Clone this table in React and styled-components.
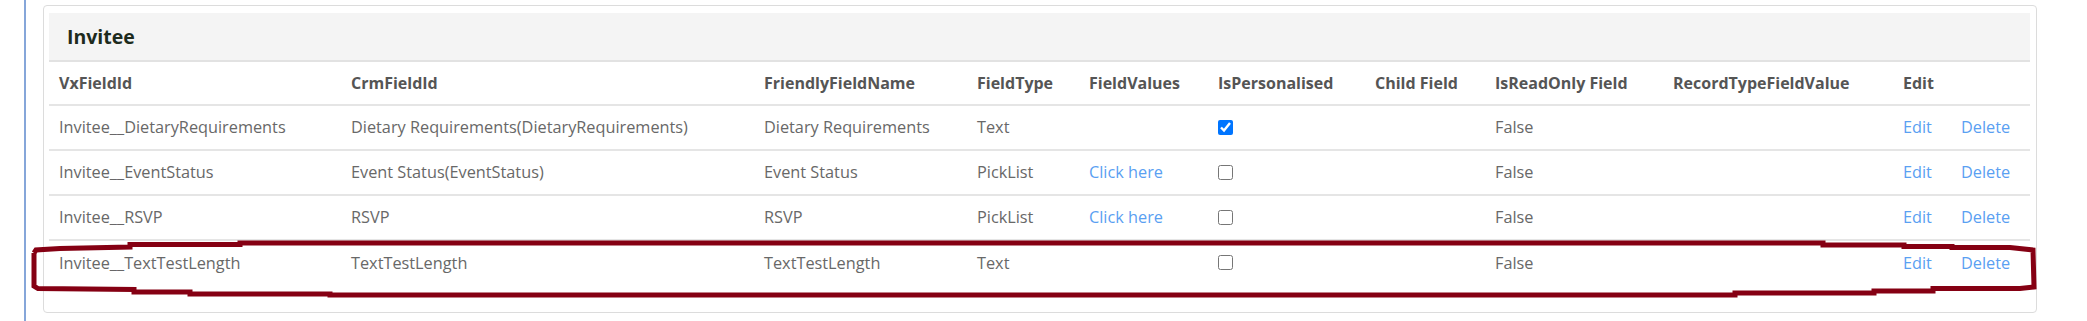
import React from "react";
import styled, { createGlobalStyle } from "styled-components";

const GlobalStyle = createGlobalStyle`
  html, body { margin: 0; padding: 0; background: #fff; }
  body { font-family: "Open Sans", "Noto Sans", Arial, sans-serif; }
  * { box-sizing: border-box; }
`;

const Page = styled.div`
  position: relative;
  width: 2087px;
  height: 321px;
  padding-left: 24px;
  display: flex;
  overflow: hidden;
`;

const Rail = styled.div`
  flex: 1;
  border-left: 2px solid #86a6d9;
  padding: 5px 50px 0 17px;
`;

const Card = styled.section`
  border: 1px solid #dcdcdc;
  border-radius: 4px;
  padding: 7px 6px 7px 5px;
  background: #fff;
`;

const Heading = styled.div`
  height: 49px;
  background: #f4f4f4;
  border-bottom: 2px solid #e2e2e2;
  display: flex;
  align-items: center;
  padding-left: 18px;
  font-size: 19.5px;
  font-weight: 700;
  color: #1d2b1d;
  padding-bottom: 1px;
`;

const Table = styled.table`
  width: 100%;
  table-layout: fixed;
  border-collapse: collapse;
  margin-bottom: 20px;
`;

const HeadCell = styled.th`
  height: 43px;
  text-align: left;
  padding: 0 0 0 10px;
  font-size: 16px;
  font-weight: 700;
  color: #555;
  border-bottom: 2px solid #e5e5e5;
  white-space: nowrap;
`;

const Row = styled.tr`
  height: 45px;
  border-bottom: ${(p) => (p.$last ? "none" : "2px solid #e5e5e5")};
`;

const Cell = styled.td`
  padding: 0 0 1px 10px;
  font-size: 16.3px;
  color: #686868;
  white-space: nowrap;
  vertical-align: middle;
`;

const LinkText = styled.a`
  color: #5aa0f2;
  text-decoration: none;
  cursor: pointer;
`;

const Check = styled.input`
  width: 15px;
  height: 15px;
  margin: 0;
  display: block;
  accent-color: #0075ff;
`;

const Overlay = styled.svg`
  position: absolute;
  left: 0;
  top: 0;
  pointer-events: none;
`;

const cols = [292, 413, 213, 112, 129, 157, 120, 178, 230, 58, 79];
const headers = [
  "VxFieldId",
  "CrmFieldId",
  "FriendlyFieldName",
  "FieldType",
  "FieldValues",
  "IsPersonalised",
  "Child Field",
  "IsReadOnly Field",
  "RecordTypeFieldValue",
  "Edit",
  "",
];

const rows = [
  { vx: "Invitee__DietaryRequirements", crm: "Dietary Requirements(DietaryRequirements)", friendly: "Dietary Requirements", type: "Text", values: false, personal: true },
  { vx: "Invitee__EventStatus", crm: "Event Status(EventStatus)", friendly: "Event Status", type: "PickList", values: true, personal: false },
  { vx: "Invitee__RSVP", crm: "RSVP", friendly: "RSVP", type: "PickList", values: true, personal: false },
  { vx: "Invitee__TextTestLength", crm: "TextTestLength", friendly: "TextTestLength", type: "Text", values: false, personal: false },
];

const annotation = [
  [34, 253], [36, 250], [60, 248.5], [130, 247], [130, 244.5], [240, 244.5], [240, 243],
  [1823, 243], [1823, 245], [1904, 245], [1904, 246.5], [1952, 246.5], [1952, 247.5],
  [2010, 247.5], [2033, 250], [2034, 287], [2020, 288.5], [1933, 288.5], [1933, 291],
  [1874, 291], [1874, 293], [1735, 293], [1735, 295], [330, 295], [330, 294],
  [190, 294], [190, 292], [134, 292], [134, 289.5], [38, 288.5], [34, 286], [34, 253],
];

export default function App() {
  return (
    <>
      <GlobalStyle />
      <Page>
        <Rail>
          <Card>
            <Heading>Invitee</Heading>
            <Table>
              <colgroup>
                {cols.map((w, i) => (
                  <col key={i} style={{ width: w }} />
                ))}
              </colgroup>
              <thead>
                <tr>
                  {headers.map((h, i) => (
                    <HeadCell key={i}>{h}</HeadCell>
                  ))}
                </tr>
              </thead>
              <tbody>
                {rows.map((r, i) => (
                  <Row key={r.vx} $last={i === rows.length - 1}>
                    <Cell>{r.vx}</Cell>
                    <Cell>{r.crm}</Cell>
                    <Cell>{r.friendly}</Cell>
                    <Cell>{r.type}</Cell>
                    <Cell>{r.values ? <LinkText>Click here</LinkText> : null}</Cell>
                    <Cell>
                      <Check type="checkbox" checked={r.personal} readOnly />
                    </Cell>
                    <Cell />
                    <Cell>False</Cell>
                    <Cell />
                    <Cell>
                      <LinkText>Edit</LinkText>
                    </Cell>
                    <Cell>
                      <LinkText>Delete</LinkText>
                    </Cell>
                  </Row>
                ))}
              </tbody>
            </Table>
          </Card>
        </Rail>
        <Overlay width="2087" height="321" viewBox="0 0 2087 321">
          <polyline
            points={annotation.map((p) => p.join(",")).join(" ")}
            fill="none"
            stroke="#850013"
            strokeWidth="5"
            strokeLinejoin="miter"
          />
        </Overlay>
      </Page>
    </>
  );
}
